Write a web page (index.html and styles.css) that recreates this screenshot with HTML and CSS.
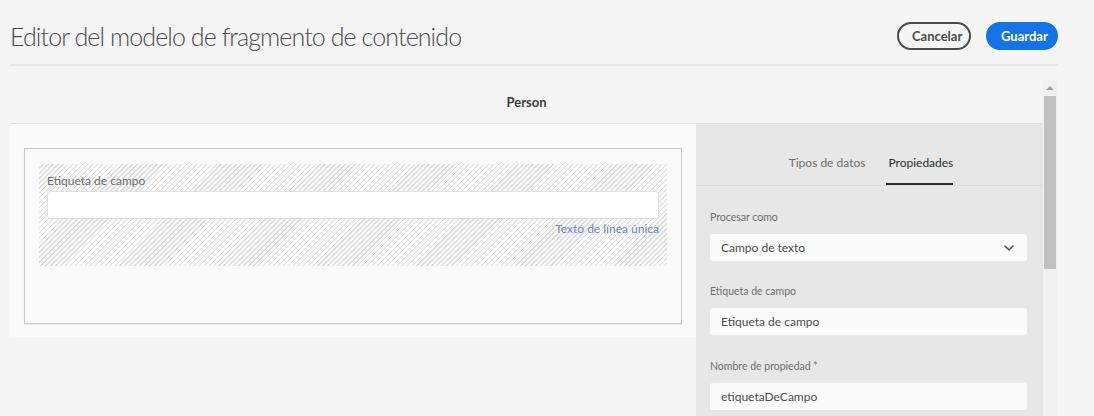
FILE: index.html
```html
<!DOCTYPE html>
<html lang="es">
<head>
<meta charset="utf-8">
<title>Editor del modelo de fragmento de contenido</title>
<link rel="stylesheet" href="styles.css">
</head>
<body>
<header class="topbar">
  <h1 class="title">Editor del modelo de fragmento de contenido</h1>
  <div class="actions">
    <button class="btn btn-secondary">Cancelar</button>
    <button class="btn btn-primary">Guardar</button>
  </div>
</header>
<div class="scroller">
  <div class="scroll-content">
    <div class="model-header">Person</div>
    <div class="editor">
      <section class="canvas">
        <div class="card">
          <div class="field-drop">
            <div class="field-label">Etiqueta de campo</div>
            <div class="field-input"></div>
            <div class="field-hint">Texto de línea única</div>
          </div>
        </div>
      </section>
      <aside class="panel">
        <nav class="tabs">
          <div class="tab">Tipos de datos</div>
          <div class="tab tab-active">Propiedades</div>
        </nav>
        <div class="form">
          <label class="form-label">Procesar como</label>
          <div class="select">
            <span>Campo de texto</span>
            <svg class="chevron" width="10" height="6" viewBox="0 0 10 6"><path d="M1 1l4 4 4-4" fill="none" stroke="#505050" stroke-width="1.6" stroke-linecap="round" stroke-linejoin="round"/></svg>
          </div>
          <label class="form-label">Etiqueta de campo</label>
          <div class="text-input">Etiqueta de campo</div>
          <label class="form-label">Nombre de propiedad *</label>
          <div class="text-input">etiquetaDeCampo</div>
        </div>
      </aside>
    </div>
  </div>
  <div class="scrollbar">
    <div class="sb-button"><span class="sb-arrow"></span></div>
    <div class="sb-thumb"></div>
  </div>
</div>
</body>
</html>
```
FILE: styles.css
```css
* { box-sizing: border-box; }
html, body { margin: 0; padding: 0; }
body {
  background: #f5f5f5;
  font-family: Lato, "Open Sans", sans-serif;
  color: #4b4b4b;
  width: 1094px;
  height: 416px;
  overflow: hidden;
}
.topbar {
  height: 66px;
  margin: 0 36px 0 10px;
  border-bottom: 2px solid #e6e6e6;
  display: flex;
  align-items: center;
  justify-content: space-between;
}
.title {
  margin: 0;
  font-weight: 300;
  font-size: 25px;
  color: #4b4b4b;
  letter-spacing: -0.9px;
  padding-top: 8px;
}
.actions { display: flex; gap: 15px; padding-top: 7px; }
.btn {
  height: 28px;
  border-radius: 14px;
  font-family: Lato, sans-serif;
  font-weight: 700;
  font-size: 13px;
  padding: 0 13px;
  cursor: pointer;
}
.btn-secondary {
  width: 74px;
  background: transparent;
  border: 2px solid #4b4b4b;
  color: #4b4b4b;
}
.btn-primary {
  width: 72px;
  background: #1473e6;
  border: 2px solid #1473e6;
  color: #fff;
}
.scroller {
  margin: 14px 37px 0 10px;
  height: 336px;
  display: flex;
  overflow: hidden;
}
.scroll-content { width: 1033px; flex: none; }
.model-header {
  height: 44px;
  border-bottom: 1px solid #e1e1e1;
  display: flex;
  align-items: center;
  justify-content: center;
  font-weight: 700;
  font-size: 13px;
  color: #3c3c3c;
  padding-top: 1px;
}
.editor { display: flex; align-items: flex-start; }
.canvas {
  width: 686px;
  background: #fafafa;
  padding: 24px 14px 13px 14px;
}
.card {
  height: 176px;
  border: 1px solid #c8c8c8;
  box-shadow: 0 1px 1px rgba(0,0,0,0.06);
  background: #fafafa;
  padding: 15px 14px;
}
.field-drop {
  height: 102px;
  padding: 8px 8px 0 8px;
  background: repeating-linear-gradient(-45deg, #f9f9f9 0 1.5px, #dddddd 1.5px 2.5px, #f9f9f9 2.5px 3.5px);
}
.field-label {
  font-size: 12px;
  line-height: 18px;
  color: #6e6e6e;
}
.field-input {
  margin-top: 1px;
  height: 28px;
  background: #fff;
  border: 1px solid #e1e1e1;
  border-radius: 3px;
}
.field-hint {
  margin-top: 2px;
  text-align: right;
  font-size: 12px;
  line-height: 16px;
  color: #6a88cf;
}
.panel {
  width: 347px;
  height: 292px;
  background: #e7e7e7;
}
.tabs {
  height: 62px;
  border-bottom: 1px solid #dcdcdc;
  display: flex;
  justify-content: center;
  gap: 21px;
  padding-left: 3px;
}
.tab {
  display: flex;
  align-items: flex-end;
  padding-bottom: 13px;
  font-size: 12px;
  color: #6e6e6e;
  border-bottom: 2px solid transparent;
}
.tab-active { color: #2c2c2c; border-bottom-color: #2c2c2c; padding-left: 2px; }
.form {
  padding: 23px 16px 0 14px;
  display: flex;
  flex-direction: column;
}
.form-label {
  font-size: 10.5px;
  line-height: 16px;
  color: #6e6e6e;
}
.form-label + .select, .form-label + .text-input { margin-top: 9px; }
.select, .text-input {
  height: 27px;
  background: #fbfbfb;
  border-radius: 3px;
  padding: 0 11px;
  font-size: 12px;
  color: #4b4b4b;
  display: flex;
  align-items: center;
}
.select { justify-content: space-between; margin-bottom: 22px; }
.text-input { margin-bottom: 23px; }
.chevron { margin-right: 2px; }
.scrollbar {
  width: 14px;
  flex: none;
  background: #f1f1f1;
  display: flex;
  flex-direction: column;
  align-items: center;
}
.sb-button {
  height: 16px;
  width: 14px;
  display: flex;
  align-items: center;
  justify-content: center;
}
.sb-arrow {
  width: 0; height: 0;
  border-left: 4px solid transparent;
  border-right: 4px solid transparent;
  border-bottom: 4px solid #a3a3a3;
}
.sb-thumb {
  width: 12px;
  height: 173px;
  background: #c1c1c1;
}
```
